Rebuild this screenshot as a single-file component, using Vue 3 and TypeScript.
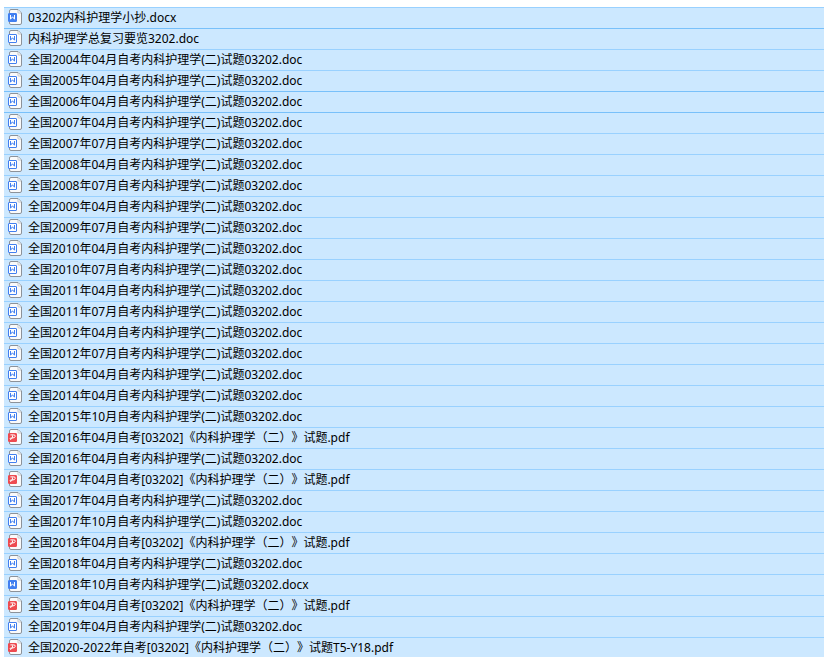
<script setup lang="ts">
type FileKind = 'docx' | 'doc' | 'pdf'

interface FileEntry {
  name: string
  kind: FileKind
  strong: boolean
}

const names: string[] = [
  '03202内科护理学小抄.docx',
  '内科护理学总复习要览3202.doc',
  '全国2004年04月自考内科护理学(二)试题03202.doc',
  '全国2005年04月自考内科护理学(二)试题03202.doc',
  '全国2006年04月自考内科护理学(二)试题03202.doc',
  '全国2007年04月自考内科护理学(二)试题03202.doc',
  '全国2007年07月自考内科护理学(二)试题03202.doc',
  '全国2008年04月自考内科护理学(二)试题03202.doc',
  '全国2008年07月自考内科护理学(二)试题03202.doc',
  '全国2009年04月自考内科护理学(二)试题03202.doc',
  '全国2009年07月自考内科护理学(二)试题03202.doc',
  '全国2010年04月自考内科护理学(二)试题03202.doc',
  '全国2010年07月自考内科护理学(二)试题03202.doc',
  '全国2011年04月自考内科护理学(二)试题03202.doc',
  '全国2011年07月自考内科护理学(二)试题03202.doc',
  '全国2012年04月自考内科护理学(二)试题03202.doc',
  '全国2012年07月自考内科护理学(二)试题03202.doc',
  '全国2013年04月自考内科护理学(二)试题03202.doc',
  '全国2014年04月自考内科护理学(二)试题03202.doc',
  '全国2015年10月自考内科护理学(二)试题03202.doc',
  '全国2016年04月自考[03202]《内科护理学（二）》试题.pdf',
  '全国2016年04月自考内科护理学(二)试题03202.doc',
  '全国2017年04月自考[03202]《内科护理学（二）》试题.pdf',
  '全国2017年04月自考内科护理学(二)试题03202.doc',
  '全国2017年10月自考内科护理学(二)试题03202.doc',
  '全国2018年04月自考[03202]《内科护理学（二）》试题.pdf',
  '全国2018年04月自考内科护理学(二)试题03202.doc',
  '全国2018年10月自考内科护理学(二)试题03202.docx',
  '全国2019年04月自考[03202]《内科护理学（二）》试题.pdf',
  '全国2019年04月自考内科护理学(二)试题03202.doc',
  '全国2020-2022年自考[03202]《内科护理学（二）》试题T5-Y18.pdf',
]

// Rows whose top divider is drawn in the darker blue
const strongRows = new Set<number>([1, 4, 5])

const files: FileEntry[] = names.map((name, index) => ({
  name,
  kind: name.slice(name.lastIndexOf('.') + 1) as FileKind,
  strong: strongRows.has(index),
}))
</script>

<template>
  <main class="explorer">
    <ul class="file-list">
      <li
        v-for="file in files"
        :key="file.name"
        class="file-row"
        :class="{ strong: file.strong }"
      >
        <svg class="file-icon" :class="file.kind" viewBox="0 0 14 18" aria-hidden="true">
          <path class="page" d="M3 .5H10L13.5 4V14Q13.5 15.5 12 15.5H3Q1.5 15.5 1.5 14V2Q1.5 .5 3 .5Z" />
          <path class="fold" d="M10 1V3.2Q10 4 10.8 4H13" />
          <rect class="badge" x=".5" y="4.5" width="8" height="8" rx=".5" />
          <path v-if="file.kind === 'pdf'" class="mark" d="M2.4 5.9H5.8Q7.4 5.9 7.2 7.4Q6.9 8.9 5 8.9H3.4Q1.8 9 2 10Q2.3 10.8 3.2 10.2Q4.5 9.3 4.7 6.4" />
          <path v-else class="mark" d="M2.5 6V10.2L4.5 7.8L6.5 10.2V6" />
        </svg>
        <span class="file-name">{{ file.name }}</span>
      </li>
    </ul>
  </main>
</template>

<style>
body {
  margin: 0;
  background: #fff;
  overflow-x: hidden;
}
</style>

<style scoped>
.explorer {
  padding: 7px 0 0 4px;
  font-family: "Noto Sans", "Noto Sans CJK SC", sans-serif;
  font-size: 12px;
  color: #000;
}

.file-list {
  margin: 0;
  padding: 0;
  list-style: none;
}

.file-row {
  display: flex;
  align-items: center;
  gap: 6px;
  box-sizing: border-box;
  height: 21px;
  padding-left: 4px;
  border-top: 1px solid #99d1ff;
  background: #cce8ff;
}

.file-row.strong {
  border-top-color: #78c0fa;
}

.file-icon {
  flex: none;
  width: 14px;
  height: 18px;
}

.file-name {
  line-height: 20px;
  white-space: nowrap;
  font-kerning: none;
  text-spacing-trim: space-all;
}

.page {
  fill: #fafafa;
  stroke: #8c9299;
}

.fold {
  fill: #fff;
  stroke: #b4b9be;
  stroke-width: .8;
}

.badge {
  fill: #417ff0;
  stroke: #417ff0;
}

.mark {
  fill: none;
  stroke: #fff;
  stroke-width: 1;
}

.doc .badge {
  fill: #fff;
}

.doc .mark {
  stroke: #417ff0;
}

.pdf .badge {
  fill: #ee4b50;
  stroke: #ee4b50;
}
</style>
